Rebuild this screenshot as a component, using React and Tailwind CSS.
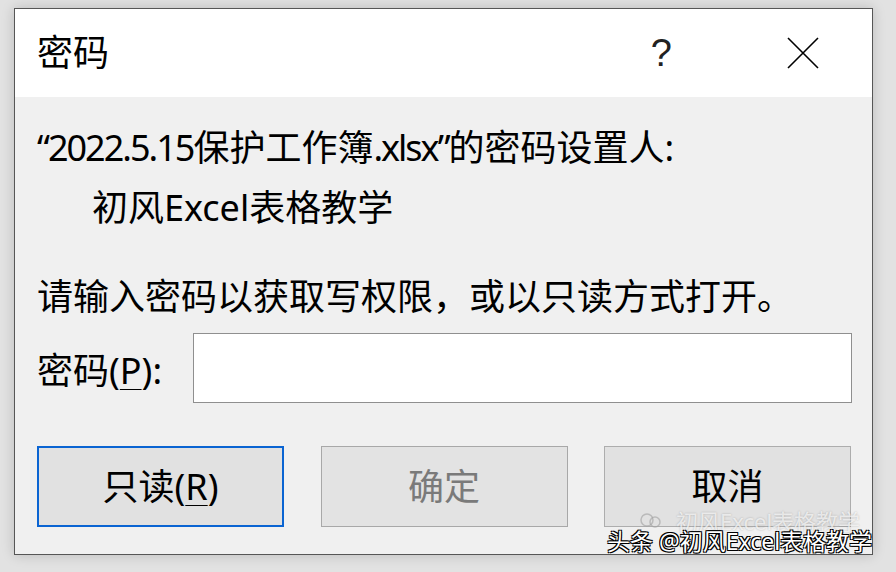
export default function App() {
  const font = "font-['Noto_Sans','Noto_Sans_CJK_SC',sans-serif]";
  return (
    <div className={`relative w-[896px] h-[572px] overflow-hidden bg-[#e2e2e2] pt-[8px] pl-[14px] ${font}`}>
      <div className="w-[859px] h-[547px] border border-[#565656] bg-[#f0f0f0] flex flex-col shadow-[0_0_12px_rgba(0,0,0,0.18)]">
        {/* title bar */}
        <div className="h-[88px] bg-white flex items-center pl-[22px] pr-[52px] text-black">
          <div className="text-[36px] leading-none flex-1">密码</div>
          <div className="text-[38px] font-light leading-none text-[#222] mr-[114px] font-['Liberation_Sans',sans-serif]">?</div>
          <svg width="34" height="34" viewBox="0 0 34 34" className="text-black">
            <path d="M2 2 L32 32 M32 2 L2 32" stroke="currentColor" strokeWidth="1.6" fill="none" />
          </svg>
        </div>
        {/* body */}
        <div className="flex flex-col pl-[22px] pr-[20px] pt-[21px] text-black text-[36px]">
          <div className="h-[60px] leading-[60px] whitespace-nowrap">
            <span className="tracking-[-2px]">“2022.5.15</span>保护工作簿<span className="tracking-[-2px]">.xlsx”</span>的密码设置人:
          </div>
          <div className="h-[60px] leading-[60px] pl-[55px] whitespace-nowrap">初风Excel表格教学</div>
          <div className="mt-[29px] h-[60px] leading-[60px] whitespace-nowrap">请输入密码以获取写权限，或以只读方式打开。</div>
          <div className="mt-[6px] flex items-center h-[70px]">
            <div className="w-[156px] whitespace-nowrap leading-none pt-[6px]">
              密码(<span className="underline underline-offset-[5px] decoration-1">P</span>):
            </div>
            <div className="flex-1 h-[70px] bg-white border border-[#8f8f8f]"></div>
          </div>
          <div className="mt-[43px] flex justify-between pr-[1px]">
            <div className="w-[247px] h-[81px] border-2 border-[#0a64d2] bg-[#e1e1e1] flex items-center justify-center leading-none">
              只读(<span className="underline underline-offset-[5px] decoration-1">R</span>)
            </div>
            <div className="w-[247px] h-[81px] border border-[#a8a8a8] bg-[#e3e3e3] flex items-center justify-center leading-none text-[#7a7a7a]">
              确定
            </div>
            <div className="w-[247px] h-[81px] border border-[#adadad] bg-[#e1e1e1] flex items-center justify-center leading-none">
              取消
            </div>
          </div>
        </div>
      </div>
      {/* watermark */}
      <div className="absolute left-[640px] top-[510px] flex items-center gap-[4px] text-[22px] leading-none text-white/70 [text-shadow:0_0_2px_rgba(0,0,0,0.25)] whitespace-nowrap">
        <svg width="22" height="16" viewBox="0 0 22 16">
          <circle cx="7" cy="7" r="6" fill="none" stroke="rgba(160,160,160,0.6)" strokeWidth="1.5" />
          <circle cx="15" cy="9" r="5" fill="none" stroke="rgba(160,160,160,0.6)" strokeWidth="1.5" />
        </svg>
        <span className="ml-[10px]">初风Excel表格教学</span>
      </div>
      <div className="absolute left-[607px] top-[530px] text-[23px] leading-none text-white whitespace-nowrap [text-shadow:0_0_1px_#000,1px_1px_0_#000,-1px_-1px_0_#000,1px_-1px_0_#000,-1px_1px_0_#000]">
        头条 @初风Excel表格教学
      </div>
    </div>
  );
}
